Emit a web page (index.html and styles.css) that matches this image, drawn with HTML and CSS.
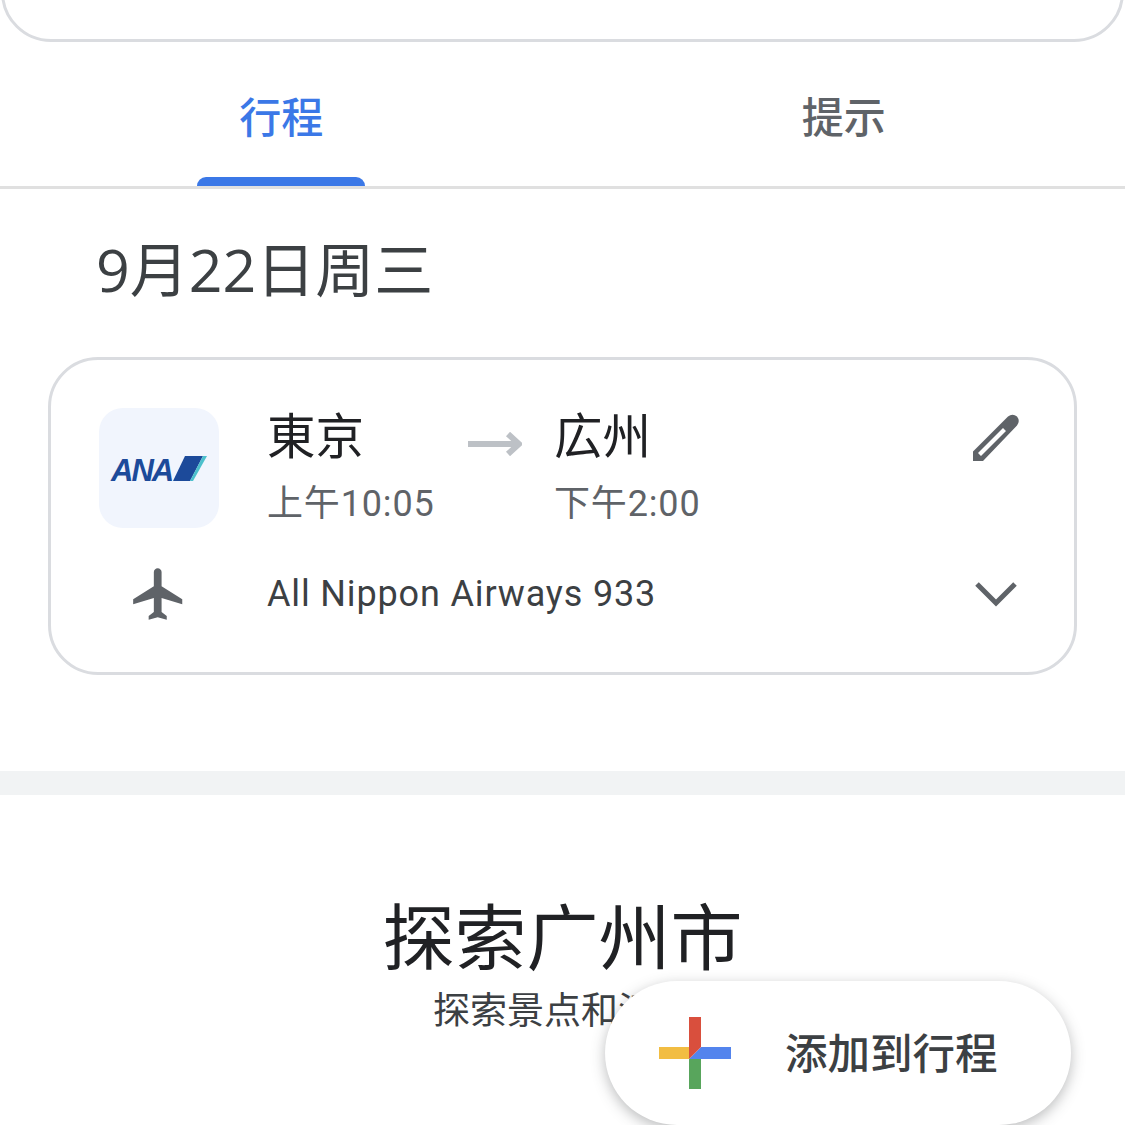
FILE: index.html

```html
<!DOCTYPE html>
<html lang="zh-CN">
<head>
  <meta charset="UTF-8">
  <meta name="viewport" content="width=device-width, initial-scale=1.0">
  <title>行程</title>
  <link rel="stylesheet" href="styles.css">
</head>
<body>
  <div class="page">
    <!-- Card above, cut by the top of the screen -->
    <div class="top-clip">
      <div class="top-card"></div>
    </div>

    <div class="tabs">
      <div class="tab tab-active">行程<span class="tab-bar"></span></div>
      <div class="tab">提示</div>
    </div>

    <h2 class="date">9月22日周三</h2>

    <!-- Flight -->
    <div class="flight">
      <div class="flight-main">
        <div class="logo">
          <span class="logo-text">ANA</span>
          <svg class="logo-stripe" viewBox="0 0 34 25" width="34" height="25">
            <polygon points="0,25 12,0 30,0 17,25" fill="#1c4a9a"/>
            <polygon points="17,25 30,0 34,0 20,25" fill="#4cc0cc"/>
          </svg>
        </div>
        <div class="place">
          <div class="city">東京</div>
          <div class="time">上午10:05</div>
        </div>
        <svg class="arrow" viewBox="0 0 54 24" width="54" height="24">
          <path d="M0 12H50M40 2L51 12L40 22" fill="none" stroke="#bdc1c6" stroke-width="6"/>
        </svg>
        <div class="place">
          <div class="city">広州</div>
          <div class="time">下午2:00</div>
        </div>
        <svg class="pencil" viewBox="0 0 52 52" width="52" height="52">
          <path fill="#5f6368" fill-rule="evenodd" d="M3 49V39.500L38 4.500Q42.500 1 47 4.500Q50.500 9 47 13.500L13 49ZM8 41L11 44L36 19L33 16Z"/>
        </svg>
      </div>
      <div class="flight-info">
        <div class="plane-cell">
          <svg viewBox="0 0 24 24" width="62" height="62">
            <path fill="#5f6368" d="M21 16v-2l-8-5V3.500c0-.83-.67-1.500-1.500-1.500S10 2.670 10 3.500V9l-8 5v2l8-2.500V19l-2 1.500V22l3.500-1 3.500 1v-1.500L13 19v-5.500l8 2.500z"/>
          </svg>
        </div>
        <div class="flight-name">All Nippon Airways 933</div>
        <svg class="chevron" viewBox="0 0 46 28" width="46" height="28">
          <polyline points="4,4 23,23 42,4" fill="none" stroke="#5f6368" stroke-width="5"/>
        </svg>
      </div>
    </div>

    <div class="band"></div>

    <div class="explore">
      <h1 class="explore-title">探索广州市</h1>
      <p class="explore-sub">探索景点和活动</p>
    </div>

    <!-- Floating button -->
    <div class="fab">
      <svg class="fab-plus" viewBox="0 0 72 72" width="72" height="72">
        <rect x="0" y="30" width="30" height="12" fill="#f2bd42"/>
        <rect x="30" y="42" width="12" height="30" fill="#58a55c"/>
        <rect x="42" y="30" width="30" height="12" fill="#5384ed"/>
        <polygon points="30,42 42,30 42,42" fill="#5384ed"/>
        <polygon points="30,0 42,0 42,30 30,42" fill="#d94f3d"/>
      </svg>
      <span class="fab-label">添加到行程</span>
    </div>
  </div>
</body>
</html>
```

FILE: styles.css

```css
* {
  box-sizing: border-box;
}
html, body {
  margin: 0;
  padding: 0;
  background: #fff;
}
body {
  font-family: Roboto, "Noto Sans CJK SC", sans-serif;
}
.page {
  position: relative;
  width: 1125px;
  height: 1125px;
  overflow: hidden;
}
.top-clip {
  height: 42px;
  overflow: hidden;
}
.top-card {
  height: 102px;
  margin: -60px 1px 0;
  border: 3px solid #dadce0;
  border-radius: 50px;
}
.tabs {
  display: flex;
  height: 148px;
  margin-top: -1px;
  border-bottom: 3px solid #e0e0e0;
}
.tab {
  position: relative;
  flex: 1;
  display: flex;
  align-items: center;
  justify-content: center;
  padding-top: 2px;
  font-size: 42px;
  font-weight: 500;
  color: #5f6368;
}
.tab-active {
  color: #3b78e7;
}
.tab-bar {
  position: absolute;
  left: 197px;
  bottom: 0;
  width: 168px;
  height: 9px;
  background: #3b78e7;
  border-radius: 9px 9px 0 0;
}
.date {
  height: 168px;
  margin: 0;
  padding: 0 0 14px 96px;
  display: flex;
  align-items: center;
  font-family: "Open Sans", "Noto Sans CJK SC", sans-serif;
  font-size: 59px;
  font-weight: 400;
  color: #3c4043;
}
.flight {
  height: 318px;
  margin: 0 48px 96px;
  padding: 48px 52px 0 48px;
  border: 3px solid #dadce0;
  border-radius: 50px;
}
.flight-main {
  display: flex;
  height: 120px;
}
.logo {
  position: relative;
  flex: none;
  width: 120px;
  height: 120px;
  margin-right: 49px;
  background: #f1f5fd;
  border-radius: 24px;
}
.logo-text {
  position: absolute;
  left: 12px;
  top: 45px;
  font-family: "Liberation Sans", sans-serif;
  font-size: 31px;
  line-height: 36px;
  font-style: italic;
  font-weight: 700;
  letter-spacing: -2px;
  color: #1c4a9a;
}
.logo-stripe {
  position: absolute;
  left: 74px;
  top: 48px;
}
.place {
  flex: none;
  width: 200px;
}
.city {
  height: 60px;
  margin: 0 0 0 -1px;
  font-size: 48.500px;
  line-height: 60px;
  color: #202124;
}
.time {
  margin: 12px 0 0 -1px;
  font-size: 36px;
  line-height: 48px;
  letter-spacing: 0.85px;
  color: #5f6368;
}
.arrow {
  flex: none;
  margin: 24px 33px 0 0;
}
.pencil {
  flex: none;
  margin: 4px 0 0 auto;
}
.flight-info {
  display: flex;
  align-items: center;
  height: 62px;
  margin-top: 35px;
}
.plane-cell {
  flex: none;
  display: flex;
  justify-content: center;
  width: 120px;
  margin-right: 48px;
}
.flight-name {
  font-size: 36px;
  letter-spacing: 0.85px;
  color: #3c4043;
}
.chevron {
  flex: none;
  margin: 0 3px 0 auto;
}
.band {
  height: 24px;
  background: #f1f3f4;
}
.explore {
  padding-top: 92px;
  text-align: center;
}
.explore-title {
  margin: 0;
  font-family: "Noto Sans CJK SC", sans-serif;
  font-size: 72px;
  line-height: 92px;
  font-weight: 400;
  color: #202124;
}
.explore-sub {
  margin: 5px 0 0;
  font-family: "Noto Sans CJK SC", sans-serif;
  font-size: 37px;
  line-height: 48px;
  color: #3c4043;
}
.fab {
  position: absolute;
  left: 605px;
  top: 981px;
  display: flex;
  align-items: center;
  width: 466px;
  height: 144px;
  padding-left: 54px;
  background: #fff;
  border-radius: 72px;
  box-shadow: 0 4px 14px rgba(60, 64, 67, 0.35);
}
.fab-plus {
  flex: none;
  margin-right: 54px;
}
.fab-label {
  padding-bottom: 6px;
  font-family: "Noto Sans CJK SC", sans-serif;
  font-size: 42.500px;
  font-weight: 500;
  color: #3c4043;
}
```
